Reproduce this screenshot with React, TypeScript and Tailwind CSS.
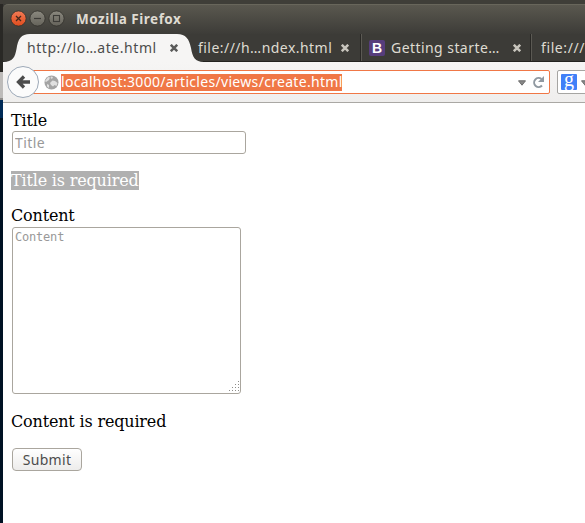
import type { ReactNode } from "react";

const ui = "font-['Noto_Sans','Open_Sans',sans-serif]";
const serif = "font-['DejaVu_Serif',serif] text-[16px] leading-[19px] tracking-[-0.17px]";

function WindowButton({ kind }: { kind: "close" | "min" | "max" }) {
  const close = kind === "close";
  return (
    <svg width="17" height="17" viewBox="0 0 17 17">
      <defs>
        <linearGradient id={kind} x1="0" y1="0" x2="0" y2="1">
          <stop offset="0" stopColor={close ? "#f47b56" : "#8b897f"} />
          <stop offset="1" stopColor={close ? "#de4c1d" : "#64625a"} />
        </linearGradient>
      </defs>
      <circle cx="8.5" cy="8.5" r="7.6" fill={`url(#${kind})`} stroke="#32312c" strokeWidth="0.8" />
      {close && <path d="M6 6l5 5M11 6l-5 5" stroke="#46281c" strokeWidth="1.3" />}
      {kind === "min" && <path d="M5 8.5h7" stroke="#3c3b37" strokeWidth="1.2" />}
      {kind === "max" && <rect x="5.5" y="5.5" width="6" height="6" fill="none" stroke="#3c3b37" strokeWidth="1.1" />}
    </svg>
  );
}

function TabClose({ color }: { color: string }) {
  return (
    <svg width="8" height="8" viewBox="0 0 8 8" className="shrink-0">
      <path d="M.8.8l6.4 6.4M7.2.8L.8 7.2" stroke={color} strokeWidth="2.5" />
    </svg>
  );
}

function Divider() {
  return <div className="h-[27px] w-[2px] shrink-0 border-l border-r border-l-[#292825] border-r-[#5b5953]" />;
}

function TabLabel({ className, children }: { className: string; children: ReactNode }) {
  return <span className={`${ui} shrink-0 whitespace-nowrap text-[14px] leading-[28px] ${className}`}>{children}</span>;
}

function Globe() {
  return (
    <svg width="15" height="15" viewBox="0 0 15 15" className="shrink-0">
      <circle cx="7.5" cy="7.5" r="7" fill="#a4a4a4" />
      <path d="M1 6L4 2l2 .5L5 5l-3 2zM7 1.500l2 .5-1 2-1.500-1zM6 8l2.500-2.500L11 6l2.500 2-1 3-2-1-1.500 1.500L7 10zM3 9l2 1v3l-2-1.500z" fill="#e0e0e0" />
    </svg>
  );
}

function DropArrow({ className }: { className: string }) {
  return (
    <svg width="8" height="6" viewBox="0 0 8 6" className={`shrink-0 ${className}`}>
      <path d="M.5.8h7L4 5.200Z" fill="#888" stroke="#6c6c6c" />
    </svg>
  );
}

export default function App() {
  return (
    <div className="flex h-[523px] w-[585px] overflow-hidden bg-[#3b3a36]">
      <aside className="flex w-[3px] shrink-0 flex-col">
        <div className="h-[4px] bg-[#403e39]" />
        <div className="h-[68px] bg-[#292825]" />
        <div className="h-[26px] bg-[#bdbbb9]" />
        <div className="h-[2px] bg-[#8e8c89]" />
        <div className="h-[18px] bg-[#002b57]" />
        <div className="flex-1 bg-[#001223]" />
      </aside>
      <div className="flex w-[582px] flex-col">
        <div className="h-[4px] shrink-0 bg-[#3f3e38]" />
        <header className="flex h-[30px] shrink-0 items-center rounded-tl-[5px] border-t border-[#68665b] bg-linear-to-b from-[#5a584f] to-[#3d3c38] pl-[7px]">
          <div className="flex gap-[2px] pb-[3px]">
            <WindowButton kind="close" />
            <WindowButton kind="min" />
            <WindowButton kind="max" />
          </div>
          <h1 className={`${ui} ml-[11px] whitespace-nowrap pb-[2px] text-[13.5px] font-bold leading-[20px] tracking-[0.5px] text-[#dfdbd2]`}>Mozilla Firefox</h1>
        </header>
        <nav className="flex h-[28px] shrink-0 border-b border-[#242320] bg-[#3c3b37]">
          <div className="relative flex h-[28px] w-[186px] shrink-0 items-center pl-[24px]">
            <svg className="absolute left-0 top-0" width="203" height="28" viewBox="0 0 203 28">
              <path d="M0 28C10 28 12 23 13.500 15C15 5 18 0 27 0H174C183 0 186 5 188 14C189.500 23 192 28 201 28Z" fill="#f6f5f4" />
            </svg>
            <div className="relative flex items-center">
              <TabLabel className="w-[143px] tracking-[0.56px] text-[#4c4c4c]">http://lo…ate.html</TabLabel>
              <TabClose color="#5b5b5a" />
            </div>
          </div>
          <div className="relative flex w-[171px] shrink-0 items-center pl-[9px]">
            <TabLabel className="w-[143px] tracking-[0.46px] text-[#dfdbd2]">file:///h…ndex.html</TabLabel>
            <TabClose color="#c8c5bd" />
          </div>
          <Divider />
          <div className="flex w-[168px] shrink-0 items-center pl-[7px]">
            <div className="mr-[6px] flex h-[16px] w-[16px] shrink-0 items-center justify-center rounded-[2px] bg-[#563d7c] font-['Liberation_Sans',sans-serif] text-[14px] font-bold leading-[16px] text-white">B</div>
            <TabLabel className="w-[122px] tracking-[0.44px] text-[#dfdbd2]">Getting starte…</TabLabel>
            <TabClose color="#c8c5bd" />
          </div>
          <Divider />
          <TabLabel className="ml-[9px] tracking-[0.6px] text-[#dfdbd2]">file:///</TabLabel>
        </nav>
        <div className="flex h-[41px] shrink-0 items-center border-b border-[#aaa8a4] bg-linear-to-b from-[#f6f5f4] to-[#efeeed] pl-[4px]">
          <div className="z-10 flex h-[32px] w-[32px] shrink-0 items-center justify-center rounded-full border border-[#9da9b8] bg-[#fbfbfb]">
            <svg width="16" height="16" viewBox="0 0 16 16"><path d="M9 2.500L3.500 8 9 13.500M4 8h11" fill="none" stroke="#4c4c4c" strokeWidth="3.3" /></svg>
          </div>
          <div className="-ml-[7px] flex h-[24px] w-[518px] shrink-0 items-center rounded-r-[2px] border border-[#f07746] bg-white pl-[11px]">
            <Globe />
            <span className={`${ui} ml-[2px] h-[17px] w-[281px] shrink-0 whitespace-nowrap bg-[#f07746] text-[14px] leading-[16px] tracking-[0.31px] text-white`}>localhost:3000/articles/views/create.html</span>
            <DropArrow className="ml-[176px] mt-[2px]" />
            <svg width="13" height="13" viewBox="0 0 13 13" className="ml-[6px] shrink-0"><path d="M10 9.5A4.500 4.500 0 1 1 9.500 3" fill="none" stroke="#9099a1" strokeWidth="2" /><path d="M12 0v6H6z" fill="#9099a1" /></svg>
          </div>
          <div className="ml-[7px] flex h-[24px] w-[60px] shrink-0 items-center rounded-[2px] border border-[#a6a5a2] bg-white pl-[3px]">
            <div className="flex h-[16px] w-[16px] items-center justify-center rounded-[1px] bg-[#4080f8] pb-[6px] font-['Liberation_Serif',serif] text-[20px] leading-[16px] text-white">g</div>
            <DropArrow className="ml-[4px] mt-[2px]" />
          </div>
        </div>
        <main className="flex flex-1 flex-col items-start bg-white pl-[8px] pt-[8px] text-black">
          <label className={serif}>Title</label>
          <input className={`${ui} ml-px mt-[1px] h-[23px] w-[234px] rounded-[3px] border border-[#aaa69e] bg-white px-[2px] text-[14px] leading-[20px] tracking-[0.4px] outline-none placeholder:text-[#999]`} placeholder="Title" />
          <p className={`${serif} mt-[17px] w-[128px] whitespace-nowrap bg-[#b0b0b0] text-white`}>Title is required</p>
          <label className={`${serif} mt-[16px]`}>Content</label>
          <div className="relative ml-px mt-[2px] h-[167px] w-[229px]">
            <textarea className="block h-[167px] w-[229px] resize-none rounded-[3px] border border-[#aaa69e] bg-white px-[2px] py-[2px] font-['DejaVu_Sans_Mono',monospace] text-[12px] leading-[15px] tracking-[-0.2px] outline-none placeholder:text-[#999]" placeholder="Content" />
            <svg className="absolute bottom-[2px] right-[1px]" width="11" height="11" viewBox="0 0 11 11" fill="#8e8d89">
              <path d="M9 0h1v1h-1zM6 3h1v1h-1zM9 3h1v1h-1zM3 6h1v1h-1zM6 6h1v1h-1zM9 6h1v1h-1zM0 9h1v1h-1zM3 9h1v1h-1zM6 9h1v1h-1zM9 9h1v1h-1z" />
            </svg>
          </div>
          <p className={`${serif} mt-[18px]`}>Content is required</p>
          <button className={`${ui} ml-px mt-[17px] h-[23px] w-[70px] rounded-[4px] border border-[#aaa69e] bg-linear-to-b from-white to-[#edeceb] text-[14px] leading-[20px] tracking-[0.3px] text-[#4c4c4c]`}>Submit</button>
        </main>
      </div>
    </div>
  );
}
